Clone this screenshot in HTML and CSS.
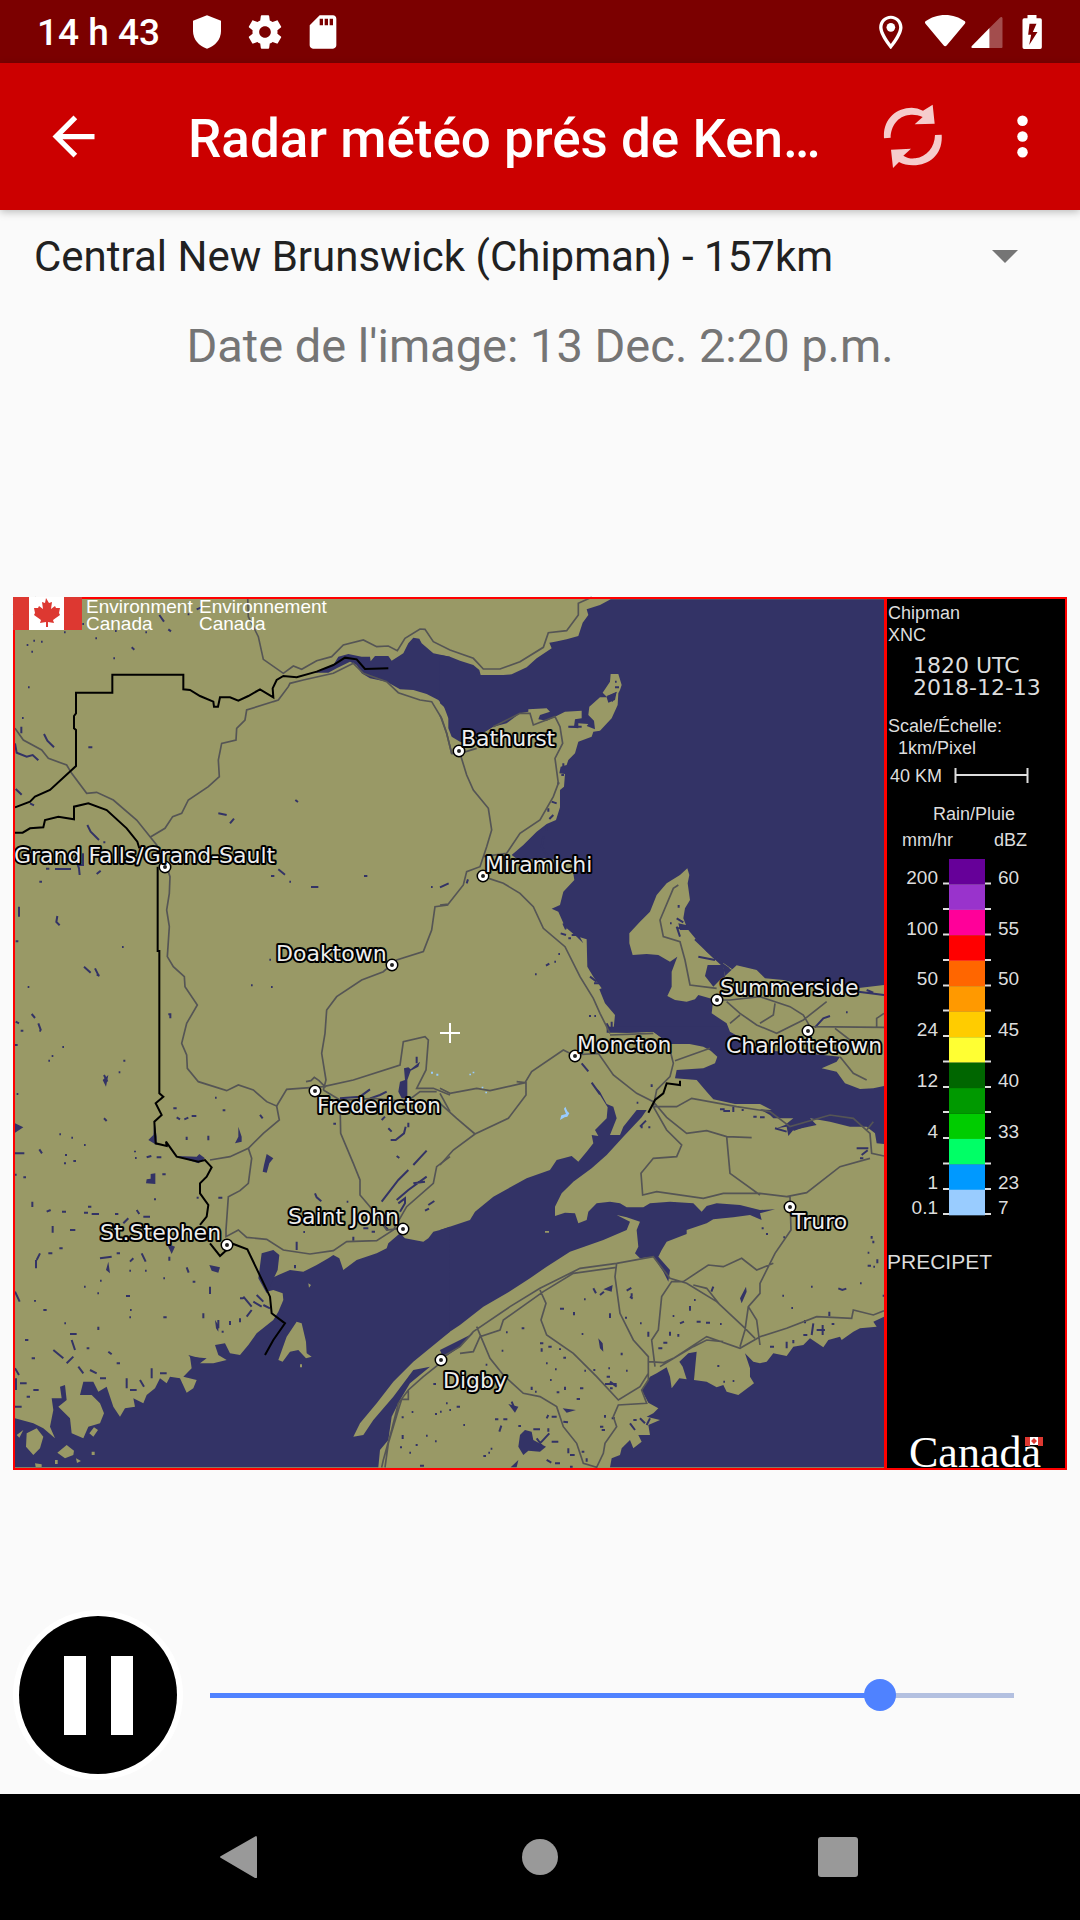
FILE: index.html
```html
<!DOCTYPE html>
<html lang="fr">
<head>
<meta charset="utf-8">
<meta name="viewport" content="width=device-width, initial-scale=1">
<title>Radar météo</title>
<link rel="stylesheet" href="styles.css">
</head>
<body>
<div class="statusbar">
  <span class="clock">14 h 43</span>
  <svg class="status-icon" viewBox="0 0 24 24" aria-hidden="true"><path d="M12 2l8.400 3.200v6.200c0 5-3.600 9.200-8.400 10.600-4.800-1.400-8.400-5.600-8.400-10.600V5.200z"/></svg>
  <svg class="status-icon" viewBox="0 0 24 24" aria-hidden="true"><path d="M19.430 12.980c.04-.32.07-.64.07-.98s-.03-.66-.07-.98l2.110-1.650c.19-.15.24-.42.12-.64l-2-3.460c-.12-.22-.39-.3-.61-.22l-2.490 1c-.52-.4-1.080-.73-1.690-.98l-.38-2.650C14.460 2.180 14.250 2 14 2h-4c-.25 0-.46.18-.49.42l-.38 2.650c-.61.25-1.170.59-1.690.98l-2.490-1c-.23-.09-.49 0-.61.22l-2 3.460c-.13.22-.07.49.12.64l2.110 1.650c-.04.32-.07.65-.07.98s.03.66.07.98l-2.110 1.650c-.19.15-.24.42-.12.64l2 3.460c.12.22.39.3.61.22l2.490-1c.52.4 1.080.73 1.690.98l.38 2.650c.03.24.24.42.49.42h4c.25 0 .46-.18.49-.42l.38-2.650c.61-.25 1.170-.59 1.690-.98l2.490 1c.23.09.49 0 .61-.22l2-3.460c.12-.22.07-.49-.12-.64zM12 15.500c-1.930 0-3.500-1.570-3.500-3.500s1.570-3.500 3.500-3.500 3.500 1.570 3.500 3.500-1.570 3.500-3.500 3.500z"/></svg>
  <svg class="status-icon" viewBox="0 0 24 24" aria-hidden="true"><path d="M18 2h-8L4.020 8 4 20c0 1.100.9 2 2 2h12c1.100 0 2-.9 2-2V4c0-1.100-.9-2-2-2zm-6 6h-2V4h2v4zm3 0h-2V4h2v4zm3 0h-2V4h2v4z"/></svg>
  <svg class="status-system" viewBox="56 42 488 102" aria-hidden="true">
    <path fill-rule="evenodd" d="M91 44c-19 0-35 15-35 35 0 26 35 66 35 66s35-40 35-66c0-20-16-35-35-35zm0 9c14 0 25 12 25 26 0 14-14 36-25 50-11-14-25-36-25-50 0-14 11-26 25-26z"/>
    <circle cx="91" cy="79" r="13"/>
    <path d="M254 42c-22 0-43 7-59 19-2 2-2 5 0 7l54 65c3 4 7 4 10 0l54-65c2-2 2-5 0-7-16-12-37-19-59-19z"/>
    <path d="M387 81v60h-51c-4 0-4-3-2-6z"/>
    <path class="dim" d="M387 81l31-31c4-4 8-2 8 2v85c0 3-1 4-4 4h-35z"/>
    <path fill-rule="evenodd" d="M501 42h27v10h11q5 0 5 5v82q0 5-5 5h-48q-5 0-5-5V57q0-5 5-5h10zM507 68l-4 33h9l-6 31 25-39h-14l11-25z"/>
  </svg>
</div>
<header class="appbar">
  <button class="bar-btn back" type="button" aria-label="Retour"><svg viewBox="0 0 24 24"><path d="M20 11H7.830l5.590-5.590L12 4l-8 8 8 8 1.410-1.410L7.830 13H20z"/></svg></button>
  <h1 class="title">Radar météo prés de Ken…</h1>
  <button class="bar-btn refresh" type="button" aria-label="Actualiser"><svg viewBox="69 310 180 195"><path d="M72 413C68 355 108 322 155 321q17 0 34 9L218 312l6 57-60 2 24-22c-14-6-28-8-40-6-34 3-56 34-56 68zM245 402c4 56-33 91-86 92q-24 0-42-10L99 502l-6-55 60-3-23 21c12 8 24 9 36 8 34-4 58-33 59-70z"/></svg></button>
  <button class="bar-btn more" type="button" aria-label="Plus d'options"><svg viewBox="0 0 24 24"><circle cx="12" cy="6" r="2"/><circle cx="12" cy="12" r="2"/><circle cx="12" cy="18" r="2"/></svg></button>
</header>
<main class="content">
  <div class="station">
    <select class="station-select" aria-label="Station radar"><option>Central New Brunswick (Chipman) - 157km</option></select>
    <svg class="caret" viewBox="0 0 26 13" aria-hidden="true"><path d="M0 0h26L13 13z"/></svg>
  </div>
  <p class="date">Date de l'image: 13 Dec. 2:20 p.m.</p>
  <figure class="radar">
    <svg class="radar-image" viewBox="13 597 1054 873" role="img" aria-label="Image radar de Chipman">
      <rect class="land" x="13" y="597" width="872" height="873"/>
      <g transform="translate(0 590) scale(.33333)">
        <g class="water">
          <path d="M945 248L1000 225 1015 200 1045 192 1085 200 1110 200 1112 214 1125 198 1165 198 1175 212 1210 190 1225 160 1240 143 1258 146 1265 160 1300 190 1350 200V400L1340 360 1315 330 1280 312 1240 300 1200 298 1160 275 1110 265 1085 250 1070 225 1050 215 1010 235 985 248z"/>
          <path transform="translate(1320)" d="M512 28L480 45 440 58 445 75 428 98 415 138 380 148 345 155 328 158 335 175 290 205 260 232 215 253 190 255 122 255 118 240 100 225 60 212 30 200 0 195V340L12 350 25 385 25 415 35 440 60 455 80 460 160 410 200 400 240 370 265 365 265 358 320 355 330 365 300 375 295 388 320 392 345 380 375 365 425 362 425 385 405 388 402 410 385 412 415 415 415 400 445 402 440 408 465 418 462 392 445 375 448 350 480 322 500 322 505 338 525 330 530 305 500 320 488 308 510 275 512 252 535 252 545 285 540 300 535 310 533 345 515 385 480 422 460 425 455 440 415 455 405 490 385 510 380 525 362 530 358 550 375 552 372 590 360 600 360 652 348 690 320 702 290 725 250 765 215 795 235 810 320 805 395 820 403 870 370 905 360 945 335 956 355 965 375 1010 410 1040 430 1060 420 1042 440 1048 442 1130 460 1160 485 1195 478 1198 495 1240 525 1275 520 1325 560 1328 640 1325 690 1362H1332V28z"/>
          <path transform="translate(1320 1320)" d="M500 8L560 8 640 5 690 42 730 38 790 50 812 62 832 80 825 100 790 115 710 120 705 145 770 150 800 185 820 208 885 222 960 222 995 240 960 238 990 255 1000 265 1060 265 1035 285 1010 295 1040 290 1045 318 1060 300 1130 285 1110 265 1170 275 1230 290 1280 290 1305 310 1310 340 1332 342V-10H500z"/>
          <path transform="translate(1320 1320)" d="M0 600L45 585 90 570 105 545 160 500 260 445 330 420 350 390 395 378 415 395 440 365 460 340 455 315 475 318 465 300 500 265 503 232 480 195 455 160 480 185 500 222 520 230 530 265 510 315 540 315 550 290 590 240 620 240 605 262 550 320 500 375 455 415 400 455 385 470 365 490 345 530 345 558 375 548 405 550 415 580 440 570 445 545 470 520 510 515 540 520 560 532 610 532 630 520 690 515 760 520 785 545 800 528 830 520 900 525 960 540 1005 538 960 550 965 570 930 555 880 562 820 568 800 580 740 600 740 612 680 635 665 660 655 680 690 720 685 755 670 725 640 680 600 685 585 670 595 650 590 600 600 575 560 562 530 555 570 575 560 600 490 630 390 665 320 710 270 745 200 790 130 830 60 885 0 925z"/>
          <path d="M0 960L60 930 100 910 60 950 10 985z" transform="translate(1320 1320)"/>
          <path transform="translate(0 1320)" d="M1350 590L1320 600 1300 605 1285 625 1270 635 1215 625 1200 610 1165 640 1160 655 1130 670 1070 690 1030 720 1018 685 1000 675 985 685 950 705 910 725 870 720 835 735 815 745 800 785 820 780 848 790 850 810 835 845 820 870 770 910 745 945 720 975 690 970 675 940 645 945 655 975 680 990 640 1000 600 1000 620 985 570 980 575 1015 550 1040 590 1050 580 1075 560 1088 540 1045 510 1040 500 1060 480 1045 465 1075 440 1095 430 1120 400 1105 405 1130 375 1135 360 1160 340 1130 325 1085 320 1070 295 1085 280 1055 250 1055 240 1095 275 1095 300 1120 312 1150 300 1180 265 1190 250 1225 215 1210 210 1165 175 1130 200 1110 195 1065 180 1070 185 1105 155 1105 160 1140 150 1190 165 1225 130 1195 100 1180 45 1165V1312H1135L1140 1260 1165 1230 1175 1160 1200 1110 1230 1060 1290 1010 1240 1020 1180 1100 1120 1170 1090 1215 1060 1220 1080 1180 1130 1120 1180 1055 1240 995 1350 905z"/>
          <path transform="translate(0 1320)" d="M785 670L820 660 838 675 833 720 800 790 775 745zM1205 205L1195 185 1200 155 1215 150 1212 115 1225 112 1232 118 1260 95 1255 110 1232 122 1222 150 1222 205zM463 270L470 320 470 345 445 330 460 315zM715 290L725 320 725 335 705 340 715 320zM800 372L820 385 808 400 800 428 788 425 792 405zM452 432L466 430 466 462 438 460 440 448 452 446zM45 280L70 292 45 308zM530 378L590 380 598 372 615 385 595 400zM628 705L660 712 655 728 635 722zM325 695L330 730 318 720zM645 870L655 885 655 905 648 895zM565 975L600 985 590 1005zM500 640L525 650 515 672zM308 150L325 135 318 170z"/>
          <path transform="translate(1320 1320)" d="M510 1312L515 1285 540 1275 545 1255 570 1230 580 1255 605 1235 595 1215 630 1215 625 1185 660 1170 620 1160 640 1150 655 1135 625 1118 605 1080 630 1040 650 1030 680 1012 690 1040 695 1075 718 1045 740 1048 728 1010 718 995 745 970 770 965 762 1050 800 1055 830 1072 850 1065 860 1085 895 1095 915 1080 942 1060 930 1040 930 1015 915 970 940 995 960 1000 980 995 1000 970 1040 978 1060 950 1090 945 1110 925 1150 952 1165 930 1200 920 1205 930 1240 905 1260 895 1310 890 1300 875 1332 860V1312zM240 1215L255 1200 275 1205 280 1230 318 1250 300 1265 265 1262 250 1275 235 1250zM205 1122L235 1130 225 1148zM368 1135L408 1140 380 1148zM490 778L518 765 515 785zM475 925L488 940 490 965 480 955zM905 820L900 805 918 770 920 785zM212 1312L235 1290 230 1312z"/>
        </g>
        <g class="land">
          <path transform="translate(1320)" d="M742 835L748 855 743 880 750 930 735 955 730 985 738 1005 715 1000 720 1020 745 1020 770 1050 800 1085 830 1105 880 1140 850 1132 855 1158 890 1126 950 1140 975 1165 1030 1170 1130 1195 1250 1195 1332 1185V1488L1300 1495 1260 1497 1215 1480 1190 1445 1145 1435 1190 1415 1200 1400 1100 1390 960 1380 905 1345 870 1325 860 1300 815 1270 820 1228 775 1215 765 1228 740 1235 705 1230 682 1218 695 1190 695 1145 712 1100 690 1115 655 1095 620 1092 578 1095 568 1060 568 1030 600 995 630 965 650 915 680 880 720 855z"/>
          <path transform="translate(0 1320)" d="M890 875L905 880 918 935 920 970 935 980 918 985 895 960 870 965 848 995 835 990 860 920zM80 1210L110 1195 130 1220 120 1255 100 1275 78 1250zM172 1268L200 1245 222 1262 220 1275 195 1285zM925 760l8 5-6 8zM275 1265h9v10h-9zM165 1290h8v12h-8zM105 1300l20 3v8h-18zM228 1285l15 8-12 6zM900 1003h6v9h-6zM1635 603h12v5h-12zM268 1210l14-18 12 8-14 20zM70 1200l-20 15 8 8z"/>
        </g>
        <path class="water" transform="translate(1320)" d="M803 1125L850 1125 855 1160 845 1165 820 1190 795 1158zM800 1085l70 50-8 8zM500 318l30-12-12 30z"/>
        <g class="lakes">
          <path d="M80 165h5M100 152h5M94 185h5M123 155h5M192 127h5M247 102h5M286 145h5M395 172l8 7M478 75l14 20M505 118l8 6M340 205h5M66 384h5M84 292h5M64 410v20M132 432l10 20 20 20M45 460l5 28 30 12 18-5 17 16M265 472h12M47 597l18 17M90 640l12 6M262 705l10 20 25 25M310 757h6M655 670l25 5M690 700l12-14M886 630l8 6M138 836h10M165 837h48M225 800l12 35 2 20M237 825h12v-35M290 852l12-10M118 875h8M57 950v30M172 978l-3 18 10 10M47 1054h8M366 1071h5M252 1130l20 18M285 1135l12 24M290 1155h8M83 1191h5M505 1273h6v12M95 1272l10 12M115 1300l8 22M47 1295l10 5M62 1322h8M835 838l20 16M868 875h5M813 858h10M933 891h22M1092 858h10M1293 891h5M1320 892l26-12M808 1109h5M753 1186h5M813 1191h5M563 73h5M436 127h5M345 123h5M590 58l14-6"/>
          <path transform="translate(0 1320)" d="M45 45h8M145 92h5M155 78h5M187 51h5M118 2h5M370 92h6M356 127h5M312 135l10 20M50 192h5M312 265l8 8M520 235h10M530 262l10 6M575 258h14M553 268l12-5M668 241h8M645 203h5M780 255l8 10M625 317v14M560 320v10M178 313h5M214 323h5M252 345h5M118 358l8 12M45 370h28M195 375h6M192 400h6M220 393h8M405 362v5M405 384h5M440 382l14-4M470 382h14M70 442h8M487 433h10M45 434h5M97 515v16M140 545l12-5M186 545h12M158 588v20M210 600h16M264 530h10M252 548h12M275 552h22M345 552h10M325 578l16 6M370 580l15-15M410 540l8 12M430 560h20M462 508h6M655 503h12M590 503h6M108 690v25M110 690l10-20M145 670h12M178 655h10M300 685l35-5M350 670h10M390 695l10-10M425 670l12 25M508 680v12M388 722h5M435 722h5M490 745h5M560 712l6 16M578 755h8M630 770v22M378 798h12M300 752h5M292 790h5M252 770h5M45 785l14 30M105 810v5M390 840h5M130 840h10M388 862h5M490 862h10M193 880h5M295 890v10M210 912h20M610 850v15M215 930l10 30M160 960l30 25M200 1000l20-20M95 985h10M75 930h10M260 955h8M325 965l10 8M45 1015l12 20M60 1060h20M48 1045v35M100 1080h16M235 1010l15 20M270 1020l20 10M350 1000h10M300 1045h18M45 1130h20M80 1100h10M455 1015v30M480 1030h20M420 1050l12 20M380 1045v30M390 1080h20M730 800l25 30M740 860l15-20M760 815l25 15M770 795l20 20M790 825l20 10M720 805h10M655 870v25M690 885v-12M720 865v12M665 905h6M1145 515L1195 450 1225 420M1240 405L1280 362M1190 510L1225 480 1280 440M1200 545L1215 520 1215 505 1195 520M1240 460L1275 455M1172 330h15l25-20 5-20M1225 278v14M1145 270l10-10M1165 295l10 10M1190 378l8 6M945 490l5 12 14 12M1000 281h8M1020 205L1080 200 1110 178M1110 205L1140 195 1160 185M1275 542l12-6M1285 525l18-12M1140 550l20 10M1090 595h15M1150 585l15 15M1115 605h10M1060 620v12M1040 515h5M910 606h5M890 635v25M885 705v10M1250 80v20M1300 1062h8M1205 1162h6M1235 1146h5M1305 1152h6M1278 1217h5M1208 1215v12M1250 1242v6M1200 1252h6M1228 1268h5M1305 1234h5M1260 1307h12M1338 1120h5"/>
          <path transform="translate(1320)" d="M716 945v8M710 985l20 12M710 1010l10 30M690 1000h5M715 1015l30-8M765 1048L820 1100 850 1120M775 1100l50 10M1125 1312L1150 1285 1170 1278M1218 1267h5M1255 1205L1332 1215M1280 1200l20 8M285 1153h5M318 1127l10-6M343 1115h5M355 1092h5M447 1278h6M463 1278h5M395 1035h14M385 1045h8M370 1000l8 18M362 1030l16 5M325 655v10M335 635l15 5M340 675l-12 12M320 705v18M370 520v20M372 555h-8M352 580h6M310 740l-5 30 18 28M430 380h12M385 410h40M500 1300l10 20M515 1295v20M450 1160l20 15M462 1180h15M80 880l4-12M525 275h5M525 292h12"/>
          <path transform="translate(1320 1320)" d="M425 100l20 24M455 158l25 35M635 163v8M590 218h5M600 290l18-18M605 295v-10M625 292h6M840 238h14M850 243h20M880 230v16M905 240h6M940 260h10M960 262h14M1005 295l35 10M1060 300l40-15M1250 355h35M1260 385h10M1265 375l18-14M705 518v10M965 595h6M978 612h6M1030 622h5M1295 618v8M1300 632v8M1283 668h5M1312 688v12M1283 707h10M1300 710h5M1260 760h5M1195 775l12 5 12-4M1113 770h5M1027 797h5M1054 834h5M1328 797h5M1168 845v14M1148 885v30M1120 880l-5 35M1095 870v10M1175 882h8M1130 900h25M1090 915h12M1060 930v10M1040 935v20M990 950h12M460 775l8 15M480 795l12-10M432 808h5M360 836h12M402 846v10M510 850v14M560 782l14-8M570 800l8 6M575 790v10M555 863h6M600 880h5M750 828v14M698 858h5M762 810h5M770 875h12M720 880l12-5M798 878h12M840 882h5M690 905v12M715 912v8M670 938h12M625 905v15M655 955h12M245 895h8M198 907h5M425 912h5M185 962h5M137 1004h5M318 1000h5M370 983h8M330 1050h5M375 1070v10M275 1070v10M345 1018h5M285 1085h5M300 940h10M305 955v10M325 950h10M350 1087h8M420 1075h10M410 1107h10M433 1022h5M460 1020h6M500 1040h10M495 1062h35M510 1055l20 15M510 1075h8M505 1015h5M545 968v8M558 1022h5M360 955v5M185 1040h5M0 1145h5M28 1140h5M50 1130h10M70 1185h5M165 1168h10M190 1168h12M215 1115l10 25M178 1205l6-18M235 1188h8M280 1198h20M320 1165l5-10M335 1160h15M370 1175l14 2M325 1195v10M300 1240L328 1210M290 1225l15 20M335 1235h20M385 1255v15M390 1275h14M345 1300h15M320 1290l14 8M425 1265h8M440 1285v10M390 1310h8M130 1278h8M145 1268h5M152 1256h5M480 1190h10M485 1200h10M515 1165h10M495 1155v8M580 1170h10M600 1165l15 15M570 1180l15 20M630 1165l-10 20M850 1055h5M878 1053h5M835 1005v6M820 770l-6 15"/>
        </g>
        <g class="roads">
          <path d="M40 75L80 40 108 22M743 22L745 80 775 140 790 208 850 250 880 228 905 238 950 212 995 200 1030 165 1090 150 1130 170 1165 168 1192 182 1215 145 1260 117 1275 118 1300 155 1350 180 1420 205 1450 237 1500 237 1560 215 1630 172 1645 128 1700 122 1735 75 1735 40 1775 22M820 335L835 330 865 290 870 280 910 270 1000 250 1060 220 1090 250 1160 275 1195 308 1260 330 1295 335 1325 385 1340 430 1355 490 1380 490M835 330L740 360 735 390 710 415 708 450 665 460 655 510 658 560 625 590 565 630 545 670 518 680 495 715 450 742M45 415L70 450 125 480 145 505 200 525 215 550 260 610 290 607 340 630 410 690 470 765 500 830 510 860 508 910 500 960 508 1010 502 1100 520 1130 553 1160 555 1190 592 1245 560 1300 545 1360 560 1395 562 1435 595 1475 680 1502 715 1485 760 1500 800 1535 830 1548 838 1590 790 1630 745 1675 690 1700 630 1710M1345 945L1305 950 1295 1020 1270 1085 1190 1110 1150 1145 1085 1170 1010 1220 980 1260 975 1330 965 1390 978 1470 970 1500"/>
          <path transform="translate(0 1320)" d="M830 228L860 178 970 170 1060 150 1200 105 1210 35 1275 20 1285 30 1278 120 1250 175 1300 175 1350 195M918 155l15-3 10-10 14 10 20 20M970 180L1020 210 1022 310 1060 400 1080 450 1080 495 1110 530 1160 600 1200 595M1020 212L1120 205 1220 215 1260 185 1310 185M1320 190L1350 245M745 355L755 385 745 460 720 482 685 500 678 600 678 620 715 600 740 622 800 628 850 660 930 672 1000 662 1040 635 1130 632 1180 600 1220 530 1300 460 1310 410 1350 380M1320 1000L1270 1040 1225 1080 1195 1120 1175 1200 1150 1290 1145 1312M1225 1080v28h-20L1195 1140 1165 1240 1155 1312"/>
          <path transform="translate(1320)" d="M0 375L20 430 35 490 60 490 80 555 100 600 145 655 155 720 140 770 120 830 80 845 70 885 25 942 0 945M60 490L110 475M160 410L240 370 270 370 280 405 345 380 360 410 368 460 345 505 355 580 340 620 300 690 240 730 200 790 130 800M130 860L190 880 240 910 280 950 310 1015 375 1070 420 1160 460 1225 480 1270 510 1330M715 885L700 895 660 990 670 1040 720 1055 735 1110 750 1185 830 1195M830 1230L870 1230 960 1220 1050 1250 1090 1275 1110 1310 1332 1312M860 1235L900 1270 950 1305 1010 1330 1090 1290 1160 1235M1005 1240L1000 1275 960 1300M870 1300L900 1275M1310 1315V1285L1332 1270M1185 1315L1230 1350M1200 1400L1240 1450 1280 1470"/>
          <path transform="translate(1320 1320)" d="M0 175L30 190 110 175 150 182 255 158 275 125 370 60 400 75 475 70 520 135 590 190 640 215 680 262 740 310 800 302 860 320 935 323M230 155L258 158V195L205 265 105 312 40 360 0 405M0 220L50 265 105 312M640 230L710 230 755 205 890 230 990 245 1050 290 1170 255 1240 265 1290 310 1295 370 1332 378M1280 300L1300 275M510 15L640 10M690 60L700 100 690 140 650 180 640 230 680 300 725 345 710 380 640 385 603 430 608 495 650 485 790 505 850 490 960 490 1040 500 1100 488 1200 410 1290 385M860 320L870 430 960 495M705 92L810 55M1050 500L1053 600 1005 670 960 760 960 790 925 830 915 900 900 950M925 830L950 870 960 945M730 755L805 705 850 710 905 685 950 720 1000 700M0 985L60 950 100 905 210 830 300 775 420 715 530 700 640 680 690 745 740 760 830 815 910 890 945 925M760 765L800 775 840 825M60 970L100 965 120 920 180 900 190 870 310 785 400 730 530 712M300 780L318 820 303 870 320 915 400 970 470 1040 535 1110 600 1070 625 1030M530 700L525 740 540 850 580 930 625 980 625 1050 605 1080 620 1120 535 1125 520 1160 530 1190 495 1240 490 1270 470 1312 430 1300 410 1240 370 1190 350 1130 300 1100 250 1090 190 1035 150 985 110 890M730 755L695 755 665 800 655 900 635 930 645 1010M625 995L670 998 700 985 800 920 900 955 960 920 1040 895 1130 860 1235 865 1240 840 1300 855 1332 842M660 1010L760 950 800 930 850 935"/>
        </g>
        <g class="borders">
          <path d="M45 652L90 635 105 620 150 600 228 528V420L222 415V378L228 370V308H337V254H550V298L570 300 600 318 640 335 642 350 654 350 660 322 690 322 715 332 745 318 780 298 820 322 818 295 830 270 850 258 890 262 950 245 1000 225 1035 203 1070 208 1095 237 1165 235M45 728H68L90 715 130 712 135 690 175 680 222 688V650L265 640 320 660 380 715 412 755 418 775M473 830V1083H478V1510L490 1520 467 1540 485 1575 463 1595 467 1660 500 1668 498 1655 530 1700 595 1715 615 1710 635 1732 620 1760 600 1780 600 1810 625 1845 620 1880 600 1905M630 1960L660 1998 700 1962 742 1978 810 2120 815 2170 855 2200 820 2250 795 2295M1945 1568L1965 1530 1990 1510 2000 1480 2040 1485V1472"/>
        </g>
        <path class="rain" d="M1680 1590l4-14 14-4-6-16 4-6 6 14 6 6-6 10-8 2zM1293 1445h6v6h-6zM1309 1451h6v6h-6zM1408 1451h5v5h-5zM1418 1445h5v5h-5zM1445 1490h5v5h-5zM1456 1505h5v5h-5z"/>
      </g>
      <path class="cross" d="M440 1033h20M450 1023v20"/>
      <defs><path id="towns" d="M165 867h0M392 965h0M459 751h0M483 876h0M717 1000h0M808 1031h0M575 1056h0M315 1091h0M403 1229h0M227 1245h0M790 1207h0M441 1360h0"/></defs>
      <use class="dot-edge" href="#towns"/><use class="dot-ring" href="#towns"/><use class="dot-core" href="#towns"/>
      <g class="towns">
        <text x="14" y="863">Grand Falls/Grand-Sault</text>
        <text x="276" y="961">Doaktown</text>
        <text x="461" y="746">Bathurst</text>
        <text x="485" y="872">Miramichi</text>
        <text x="720" y="995">Summerside</text>
        <text x="577" y="1052">Moncton</text>
        <text x="726" y="1053">Charlottetown</text>
        <text x="317" y="1113">Fredericton</text>
        <text x="288" y="1224">Saint John</text>
        <text x="100" y="1240">St.Stephen</text>
        <text x="792" y="1229">Truro</text>
        <text x="443" y="1388">Digby</text>
      </g>
      <g class="agency">
        <text x="86" y="613">Environment</text><text x="86" y="630">Canada</text>
        <text x="199" y="613">Environnement</text><text x="199" y="630">Canada</text>
      </g>
      <rect class="panel" x="887" y="597" width="180" height="873"/>
      <path class="frame" d="M14 598H1066V1469H14z"/>
      <path class="frame divider" d="M885.500 598V1469"/>
      <g class="flag">
        <rect class="flag-white" x="29" y="597" width="35" height="33"/>
        <path d="M13 597h16v33H13zM64 597h18v33H64zM46 598l3 5 3-1-1 7 4-3 1 2h4l-1 5 1 2-7 5 1 3-6-1v5h-2v-5l-6 1 1-3-7-5 1-2-1-5h4l1-2 4 3-1-7 3 1z"/>
      </g>
      <g class="legend">
        <text x="888" y="619">Chipman</text><text x="888" y="641">XNC</text>
        <text class="stamp" x="913" y="673">1820 UTC</text><text class="stamp" x="913" y="695">2018-12-13</text>
        <text x="888" y="732">Scale/Échelle:</text><text x="898" y="754">1km/Pixel</text><text x="890" y="782">40 KM</text>
        <text x="933" y="820">Rain/Pluie</text><text x="902" y="846">mm/hr</text><text x="994" y="846">dBZ</text>
        <path class="rule" d="M955.500 768v15M1027.500 768v15M955 775h73"/>
        <g class="scale right">
          <text x="938" y="884">200</text><text x="938" y="935">100</text><text x="938" y="985">50</text><text x="938" y="1036">24</text><text x="938" y="1087">12</text><text x="938" y="1138">4</text><text x="938" y="1189">1</text><text x="938" y="1214">0.1</text>
        </g>
        <g class="scale">
          <text x="998" y="884">60</text><text x="998" y="935">55</text><text x="998" y="985">50</text><text x="998" y="1036">45</text><text x="998" y="1087">40</text><text x="998" y="1138">33</text><text x="998" y="1189">23</text><text x="998" y="1214">7</text>
        </g>
        <path class="rule" d="M943 883.500h48M943 909h48M943 934.500h48M943 960h48M943 985.500h48M943 1010.500h48M943 1036h48M943 1061.500h48M943 1087h48M943 1112h48M943 1138h48M943 1163.500h48M943 1189h48M943 1214h48"/>
        <g transform="translate(949 859) scale(1 1.818)">
          <rect width="36" height="14" fill="#609"/><rect y="14" width="36" height="14" fill="#93c"/><rect y="28" width="36" height="14" fill="#f09"/><rect y="42" width="36" height="14" fill="#f00"/><rect y="56" width="36" height="14" fill="#f60"/><rect y="70" width="36" height="14" fill="#f90"/><rect y="84" width="36" height="14" fill="#fc0"/><rect y="98" width="36" height="14" fill="#ff3"/><rect y="112" width="36" height="14" fill="#060"/><rect y="126" width="36" height="14" fill="#090"/><rect y="140" width="36" height="14" fill="#0c0"/><rect y="154" width="36" height="14" fill="#0f6"/><rect y="168" width="36" height="14" fill="#09f"/><rect y="182" width="36" height="14" fill="#9cf"/>
        </g>
        <text class="product" x="887" y="1269">PRECIPET</text>
        <text class="wordmark" x="909" y="1467">Canada</text>
        <g class="flag"><rect class="flag-white" x="1030" y="1437" width="8" height="8"/><path d="M1025 1437h5v9h-5zM1038 1437h5v9h-5zM1034 1438l3 3-3 3-3-3z"/></g>
      </g>
    </svg>
  </figure>
  <div class="player">
    <button class="pause" type="button" aria-label="Pause"><svg viewBox="0 0 170 170"><circle class="halo" cx="85" cy="85" r="85"/><circle cx="85" cy="85" r="79"/><path class="bars" d="M51 46h22v79H51zM98 46h22v79H98z"/></svg></button>
    <input class="seek" type="range" min="0" max="6" step="1" value="5" aria-label="Position de l'animation">
  </div>
</main>
<nav class="navbar" aria-label="Système">
  <button type="button" aria-label="Précédent"><svg viewBox="0 0 42 42"><path d="M36 0q1 0 1 2v39q0 2-2 1L1 22q-2-1 0-2z"/></svg></button>
  <button type="button" aria-label="Accueil"><svg viewBox="0 0 42 42"><circle cx="21" cy="21" r="18"/></svg></button>
  <button type="button" aria-label="Aperçu"><svg viewBox="0 0 42 42"><rect x="0" y="1" width="40" height="40" rx="3"/></svg></button>
</nav>
</body>
</html>
```
FILE: styles.css
```css
* { box-sizing: border-box; }

body {
  margin: 0;
  min-height: 100vh;
  display: flex;
  flex-direction: column;
  background: #fafafa;
  font-family: Roboto, "Noto Sans", sans-serif;
}

button {
  display: flex;
  align-items: center;
  justify-content: center;
  margin: 0;
  padding: 0;
  border: 0;
  background: none;
}

/* Status bar */
.statusbar {
  display: flex;
  align-items: center;
  gap: 18px;
  height: 63px;
  padding: 0 38px 0 37px;
  background: #7b0000;
  color: #fff;
  fill: #fff;
}
.clock {
  width: 132px;
  padding-top: 3px;
  font-size: 37px;
  font-weight: 500;
  line-height: 40px;
  white-space: nowrap;
}
.status-icon { width: 40px; height: 40px; }
.status-system { width: 163px; height: 34px; margin-left: auto; }
.dim { fill-opacity: .3; }

/* App bar */
.appbar {
  display: flex;
  align-items: center;
  height: 147px;
  padding-right: 6px;
  background: #c00;
  color: #fff;
  box-shadow: 0 2px 8px rgba(0, 0, 0, .25);
}
.bar-btn { height: 147px; fill: #fff; }
.bar-btn svg { width: 63px; height: 63px; }
.back { width: 147px; }
.refresh { width: 116px; fill: #f5cccc; }
.refresh svg { width: 60px; height: 65px; }
.more { width: 103px; }
.title {
  flex: 1;
  min-width: 0;
  margin: 0;
  padding: 4px 0 0 41px;
  overflow: hidden;
  font-size: 53px;
  font-weight: 500;
  line-height: 62px;
  white-space: nowrap;
}

/* Content */
.content { flex: 1; display: flex; flex-direction: column; }
.station {
  display: grid;
  grid-template-columns: 1fr 88px;
  align-items: center;
  height: 92px;
}
.station-select {
  grid-area: 1 / 1 / 2 / 3;
  width: 100%;
  height: 92px;
  padding: 0 88px 0 34px;
  border: 0;
  background: none;
  appearance: none;
  color: #212121;
  font: 42px Roboto, "Noto Sans", sans-serif;
}
.caret {
  grid-area: 1 / 2;
  width: 26px;
  height: 13px;
  fill: #757575;
  pointer-events: none;
}
.date {
  margin: 0;
  padding-top: 16px;
  color: #757575;
  font-size: 47px;
  line-height: 56px;
  text-align: center;
}

/* Radar image */
.radar {
  flex: 1;
  display: flex;
  align-items: center;
  margin: 0;
  padding: 96px 13px 0;
}
.radar-image { display: block; width: 100%; height: auto; overflow: visible; }
.land { fill: #996; }
.water { fill: #336; }
.lakes { fill: none; stroke: #336; stroke-width: 6; }
.roads { fill: none; stroke: #555; stroke-width: 5; }
.borders { fill: none; stroke: #000; stroke-width: 6; }
.rain { fill: #9cf; }
.cross { stroke: #fff; stroke-width: 2; }
.dot-edge, .dot-ring, .dot-core { fill: none; stroke-linecap: round; }
.dot-edge { stroke: #000; stroke-width: 13; }
.dot-ring { stroke: #fff; stroke-width: 10; }
.dot-core { stroke: #222; stroke-width: 4; }
.towns {
  fill: #eee;
  stroke: #000;
  stroke-width: 4;
  stroke-linejoin: round;
  paint-order: stroke;
  font: 22px "DejaVu Sans", sans-serif;
}
.agency { fill: #fff; font: 19px "Liberation Sans", sans-serif; }
.panel { fill: #000; }
.frame { fill: none; stroke: #f00; stroke-width: 2; }
.divider { stroke-width: 3; }
.flag { fill: #dd3831; }
.flag-white { fill: #fff; }
.legend { fill: #ddd; font: 18px "Liberation Sans", sans-serif; }
.legend .scale { font-size: 19px; }
.legend .right { text-anchor: end; }
.legend .stamp { font: 22px "DejaVu Sans", sans-serif; }
.legend .product { font-size: 21px; }
.legend .wordmark { fill: #fff; font: 44px "Liberation Serif", serif; }
.rule { fill: none; stroke: #ddd; stroke-width: 2; }

/* Player */
.player {
  display: flex;
  align-items: center;
  height: 198px;
  padding: 0 50px 0 13px;
}
.pause svg { width: 170px; height: 170px; }
.halo, .bars { fill: #fff; }
.seek {
  flex: 1;
  min-width: 0;
  height: 32px;
  margin: 0 0 0 11px;
  appearance: none;
  background: linear-gradient(to right, #4f82ff 83%, #b3c0e0 83%) center / calc(100% - 32px) 5px no-repeat;
}
.seek::-webkit-slider-thumb {
  appearance: none;
  width: 32px;
  height: 32px;
  border-radius: 50%;
  background: #4f82ff;
}

/* Navigation bar */
.navbar {
  display: flex;
  align-items: center;
  justify-content: center;
  gap: 173px;
  height: 126px;
  background: #000;
  fill: #999;
}
.navbar button { width: 126px; height: 126px; }
.navbar svg { width: 42px; height: 42px; }
```
